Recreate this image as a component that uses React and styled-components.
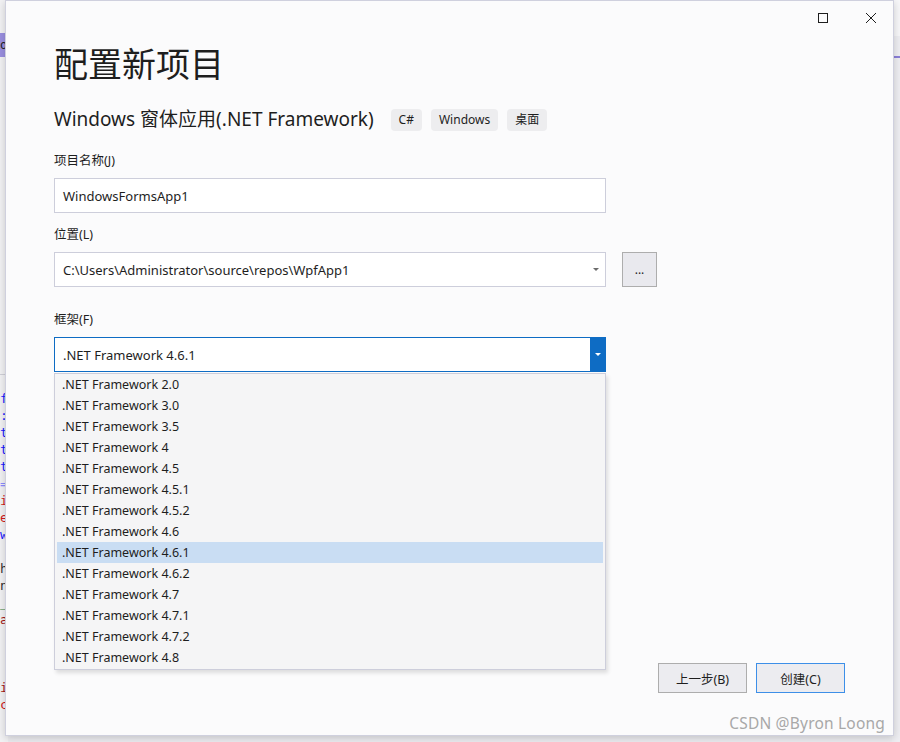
import styled, { createGlobalStyle } from "styled-components";

const GlobalStyle = createGlobalStyle`
  html, body {
    margin: 0;
    padding: 0;
    background: #ececf0;
  }
  body {
    font-family: "Noto Sans", "Noto Sans CJK SC", sans-serif;
    color: #1e1e1e;
  }
`;

const FRAMEWORKS = [
  "2.0",
  "3.0",
  "3.5",
  "4",
  "4.5",
  "4.5.1",
  "4.5.2",
  "4.6",
  "4.6.1",
  "4.6.2",
  "4.7",
  "4.7.1",
  "4.7.2",
  "4.8",
];

const CODE_LINES = [
  { ch: "f", color: "#1a1aff" },
  { ch: ":", color: "#1a1aff" },
  { ch: "t", color: "#1a1aff" },
  { ch: "t", color: "#1a1aff" },
  { ch: "t", color: "#1a1aff" },
  { ch: "=", color: "#8c8cff" },
  { ch: "i", color: "#d11b1b" },
  { ch: "e", color: "#d11b1b" },
  { ch: "w", color: "#1a1aff" },
  { ch: " ", color: "#000" },
  { ch: "h", color: "#333" },
  { ch: "n", color: "#333" },
  { ch: "_", color: "#2e7d32" },
  { ch: "a", color: "#a31515" },
  { ch: " ", color: "#000" },
  { ch: " ", color: "#000" },
  { ch: " ", color: "#000" },
  { ch: "i", color: "#a31515" },
  { ch: "c", color: "#d11b1b" },
];

const Page = styled.div`
  position: relative;
  width: 900px;
  height: 742px;
  overflow: hidden;
  display: flex;
`;

const Backdrop = styled.div`
  width: 8px;
  height: 742px;
  background: #f2f2f4;
  display: flex;
  flex-direction: column;
  flex-shrink: 0;
`;

const TopBand = styled.div`
  height: 24px;
  margin-top: 33px;
  background: #9a8fe0;
  font: 12px "DejaVu Sans Mono", monospace;
  line-height: 24px;
  color: #222;
`;

const CodeArea = styled.div`
  margin-top: 317px;
  border-top: 1px solid #d0d0d8;
  padding-top: 15px;
  display: flex;
  flex-direction: column;
`;

const CodeLine = styled.div`
  height: 17px;
  font: 13px "DejaVu Sans Mono", monospace;
  line-height: 17px;
  color: ${({ color }) => color};
  white-space: pre;
`;

const Spacer = styled.div`
  flex: 1;
`;

const RightStrip = styled.div`
  width: 8px;
  background: #eeeef2;
  display: flex;
  flex-direction: column;
`;

const RightTop = styled.div`
  height: 36px;
  background: #f7f7f9;
`;

const RightMark = styled.div`
  height: 12px;
  width: 2px;
  margin-top: 4px;
  background: #5a6d9a;
`;

const RightLine = styled.div`
  height: 2px;
  margin-top: 4px;
  background: #8a7fd8;
`;

const Dialog = styled.div`
  position: absolute;
  left: 5px;
  top: 0;
  width: 887px;
  height: 734px;
  background: #fbfbfc;
  border: 1px solid #cfd0de;
  box-shadow: 0 2px 8px rgba(0, 0, 0, 0.18);
  display: flex;
  flex-direction: column;
`;

const TitleBar = styled.div`
  height: 34px;
  display: flex;
  justify-content: flex-end;
  align-items: center;
  gap: 36px;
  padding-right: 16px;
`;

const ControlIcon = styled.svg`
  width: 12px;
  height: 12px;
`;

const Content = styled.div`
  padding-left: 48px;
  display: flex;
  flex-direction: column;
`;

const Title = styled.h1`
  margin: 0;
  font-family: "Noto Sans CJK SC", sans-serif;
  font-weight: 400;
  font-size: 34px;
  line-height: 56px;
  color: #1e1e1e;
`;

const SubRow = styled.div`
  display: flex;
  align-items: center;
  margin-top: 12px;
  height: 30px;
`;

const Subtitle = styled.h2`
  margin: 0 17px 0 0;
  font-weight: 400;
  font-size: 19px;
  color: #1e1e1e;
  white-space: nowrap;
`;

const Tag = styled.span`
  height: 22px;
  padding: 0 8px;
  margin: 3px 9px 0 0;
  background: #ededef;
  border-radius: 4px;
  font-size: 12px;
  line-height: 22px;
  color: #1e1e1e;
`;

const Label = styled.div`
  font-size: 12.5px;
  line-height: 18px;
  margin-top: ${({ top }) => top}px;
  color: #1e1e1e;
`;

const FieldRow = styled.div`
  display: flex;
  align-items: center;
  gap: 16px;
  margin-top: ${({ top }) => top}px;
`;

const Box = styled.div`
  position: relative;
  width: 552px;
  height: 35px;
  box-sizing: border-box;
  background: #fff;
  border: 1px solid ${({ active }) => (active ? "#0e6cc4" : "#cdcedb")};
  display: flex;
  align-items: center;
  padding-left: 8px;
  font-size: 13px;
  color: #1e1e1e;
`;

const BoxText = styled.span`
  flex: 1;
  white-space: nowrap;
`;

const SmallArrow = styled.span`
  width: 0;
  height: 0;
  margin-right: 6px;
  border-left: 3px solid transparent;
  border-right: 3px solid transparent;
  border-top: 3px solid #6b6b6b;
`;

const DropButton = styled.span`
  width: 15px;
  height: 100%;
  background: #0e6cc4;
  display: flex;
  align-items: center;
  justify-content: center;
`;

const WhiteArrow = styled.span`
  width: 0;
  height: 0;
  border-left: 3px solid transparent;
  border-right: 3px solid transparent;
  border-top: 3px solid #fff;
`;

const BrowseButton = styled.button`
  width: 35px;
  height: 35px;
  background: #e9e9ee;
  border: 1px solid #adadad;
  font-family: inherit;
  font-size: 12px;
  color: #1e1e1e;
  padding: 0;
  cursor: default;
`;

const DropList = styled.ul`
  position: absolute;
  top: 34px;
  left: -1px;
  width: 552px;
  box-sizing: border-box;
  margin: 1px 0 0;
  padding: 0 2px 1px;
  list-style: none;
  background: #f5f5f6;
  border: 1px solid #cdcedb;
  box-shadow: 2px 3px 4px rgba(0, 0, 0, 0.12);
  z-index: 2;
`;

const DropItem = styled.li`
  height: 21px;
  line-height: 21px;
  padding-left: 5px;
  font-size: 12.5px;
  color: #1e1e1e;
  background: ${({ selected }) => (selected ? "#c9ddf3" : "transparent")};
`;

const Footer = styled.div`
  margin-top: auto;
  display: flex;
  justify-content: flex-end;
  gap: 9px;
  padding: 0 48px 42px 0;
`;

const Button = styled.button`
  width: 89px;
  height: 30px;
  background: #ececf0;
  border: 1px solid ${({ primary }) => (primary ? "#3d8fe8" : "#adadad")};
  font-family: inherit;
  font-size: 12.5px;
  color: #1e1e1e;
  cursor: default;
`;

const Watermark = styled.div`
  position: absolute;
  right: 15px;
  bottom: 8px;
  font-family: "Noto Sans", "Noto Sans CJK SC", sans-serif;
  font-size: 15.5px;
  color: #a8a8a8;
  letter-spacing: 0.2px;
  z-index: 3;
`;

const App = () => {
  return (
    <>
      <GlobalStyle />
      <Page>
        <Backdrop>
          <TopBand>o</TopBand>
          <CodeArea>
            {CODE_LINES.map((line, i) => (
              <CodeLine key={i} color={line.color}>
                {line.ch}
              </CodeLine>
            ))}
          </CodeArea>
        </Backdrop>
        <Spacer />
        <RightStrip>
          <RightTop />
          <RightMark />
          <RightLine />
        </RightStrip>

        <Dialog>
          <TitleBar>
            <ControlIcon viewBox="0 0 12 12">
              <rect x="1.5" y="1.5" width="9" height="9" fill="none" stroke="#1e1e1e" strokeWidth="1" />
            </ControlIcon>
            <ControlIcon viewBox="0 0 12 12">
              <path d="M1 1 L11 11 M11 1 L1 11" stroke="#1e1e1e" strokeWidth="1" />
            </ControlIcon>
          </TitleBar>
          <Content>
            <Title>配置新项目</Title>
            <SubRow>
              <Subtitle>Windows 窗体应用(.NET Framework)</Subtitle>
              <Tag>C#</Tag>
              <Tag>Windows</Tag>
              <Tag>桌面</Tag>
            </SubRow>

            <Label top={19}>项目名称(J)</Label>
            <FieldRow top={8}>
              <Box>
                <BoxText>WindowsFormsApp1</BoxText>
              </Box>
            </FieldRow>

            <Label top={13}>位置(L)</Label>
            <FieldRow top={8}>
              <Box>
                <BoxText>C:\Users\Administrator\source\repos\WpfApp1</BoxText>
                <SmallArrow />
              </Box>
              <BrowseButton>...</BrowseButton>
            </FieldRow>

            <Label top={24}>框架(F)</Label>
            <FieldRow top={8}>
              <Box active>
                <BoxText>.NET Framework 4.6.1</BoxText>
                <DropButton>
                  <WhiteArrow />
                </DropButton>
                <DropList>
                  {FRAMEWORKS.map((v) => (
                    <DropItem key={v} selected={v === "4.6.1"}>
                      .NET Framework {v}
                    </DropItem>
                  ))}
                </DropList>
              </Box>
            </FieldRow>
          </Content>
          <Footer>
            <Button>上一步(B)</Button>
            <Button primary>创建(C)</Button>
          </Footer>
        </Dialog>
        <Watermark>CSDN @Byron Loong</Watermark>
      </Page>
    </>
  );
};

export default App;
